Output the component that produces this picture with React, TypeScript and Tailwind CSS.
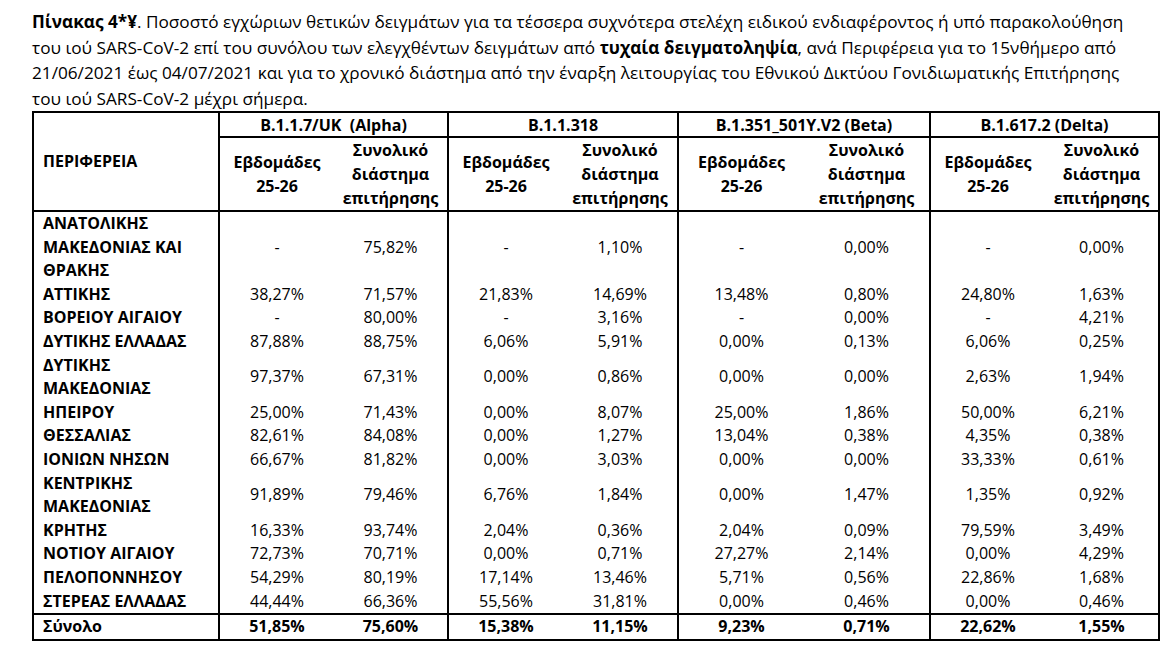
import React from "react"

type Row = { name: string[]; vals: string[] }

const rows: Row[] = [
  { name: ["ΑΝΑΤΟΛΙΚΗΣ", "ΜΑΚΕΔΟΝΙΑΣ ΚΑΙ", "ΘΡΑΚΗΣ"], vals: ["-", "75,82%", "-", "1,10%", "-", "0,00%", "-", "0,00%"] },
  { name: ["ΑΤΤΙΚΗΣ"], vals: ["38,27%", "71,57%", "21,83%", "14,69%", "13,48%", "0,80%", "24,80%", "1,63%"] },
  { name: ["ΒΟΡΕΙΟΥ ΑΙΓΑΙΟΥ"], vals: ["-", "80,00%", "-", "3,16%", "-", "0,00%", "-", "4,21%"] },
  { name: ["ΔΥΤΙΚΗΣ ΕΛΛΑΔΑΣ"], vals: ["87,88%", "88,75%", "6,06%", "5,91%", "0,00%", "0,13%", "6,06%", "0,25%"] },
  { name: ["ΔΥΤΙΚΗΣ", "ΜΑΚΕΔΟΝΙΑΣ"], vals: ["97,37%", "67,31%", "0,00%", "0,86%", "0,00%", "0,00%", "2,63%", "1,94%"] },
  { name: ["ΗΠΕΙΡΟΥ"], vals: ["25,00%", "71,43%", "0,00%", "8,07%", "25,00%", "1,86%", "50,00%", "6,21%"] },
  { name: ["ΘΕΣΣΑΛΙΑΣ"], vals: ["82,61%", "84,08%", "0,00%", "1,27%", "13,04%", "0,38%", "4,35%", "0,38%"] },
  { name: ["ΙΟΝΙΩΝ ΝΗΣΩΝ"], vals: ["66,67%", "81,82%", "0,00%", "3,03%", "0,00%", "0,00%", "33,33%", "0,61%"] },
  { name: ["ΚΕΝΤΡΙΚΗΣ", "ΜΑΚΕΔΟΝΙΑΣ"], vals: ["91,89%", "79,46%", "6,76%", "1,84%", "0,00%", "1,47%", "1,35%", "0,92%"] },
  { name: ["ΚΡΗΤΗΣ"], vals: ["16,33%", "93,74%", "2,04%", "0,36%", "2,04%", "0,09%", "79,59%", "3,49%"] },
  { name: ["ΝΟΤΙΟΥ ΑΙΓΑΙΟΥ"], vals: ["72,73%", "70,71%", "0,00%", "0,71%", "27,27%", "2,14%", "0,00%", "4,29%"] },
  { name: ["ΠΕΛΟΠΟΝΝΗΣΟΥ"], vals: ["54,29%", "80,19%", "17,14%", "13,46%", "5,71%", "0,56%", "22,86%", "1,68%"] },
  { name: ["ΣΤΕΡΕΑΣ ΕΛΛΑΔΑΣ"], vals: ["44,44%", "66,36%", "55,56%", "31,81%", "0,00%", "0,46%", "0,00%", "0,46%"] },
]

const total = ["51,85%", "75,60%", "15,38%", "11,15%", "9,23%", "0,71%", "22,62%", "1,55%"]

const groups = ["B.1.1.7/UK\u00a0\u00a0(Alpha)", "B.1.1.318", "B.1.351_501Y.V2 (Beta)", "B.1.617.2 (Delta)"]

export default function App() {
  return (
    <div className="w-[1171px] h-[652px] bg-white text-black overflow-hidden pl-[32px] pt-[9px] font-['Open_Sans',sans-serif] font-medium">
      {/* caption */}
      <div className="text-[17.2px] leading-[25.5px] whitespace-nowrap">
        <div>
          <b className="font-bold">Πίνακας 4*¥</b>. Ποσοστό εγχώριων θετικών δειγμάτων για τα τέσσερα συχνότερα στελέχη ειδικού ενδιαφέροντος ή υπό παρακολούθηση
        </div>
        <div>
          του ιού SARS-CoV-2 επί του συνόλου των ελεγχθέντων δειγμάτων από <b className="font-bold">τυχαία δειγματοληψία</b>, ανά Περιφέρεια για το 15νθήμερο από
        </div>
        <div>21/06/2021 έως 04/07/2021 και για το χρονικό διάστημα από την έναρξη λειτουργίας του Εθνικού Δικτύου Γονιδιωματικής Επιτήρησης</div>
        <div>του ιού SARS-CoV-2 μέχρι σήμερα.</div>
      </div>

      <table className="border-collapse table-fixed w-[1126px] border-2 border-black text-[16px] leading-[23.6px]">
        <colgroup>
          <col className="w-[186px]" />
          <col className="w-[115px]" />
          <col className="w-[114px]" />
          <col className="w-[115px]" />
          <col className="w-[115px]" />
          <col className="w-[126px]" />
          <col className="w-[126px]" />
          <col className="w-[115px]" />
          <col className="w-[114px]" />
        </colgroup>
        <thead>
          <tr className="h-[25px]">
            <th rowSpan={2} className="border-2 border-black text-left align-middle pl-[9px] font-bold">
              ΠΕΡΙΦΕΡΕΙΑ
            </th>
            {groups.map((g) => (
              <th key={g} colSpan={2} className="border-2 border-black text-center font-bold p-0 leading-[22px]">
                {g}
              </th>
            ))}
          </tr>
          <tr className="h-[74px]">
            {groups.map((g) => (
              <React.Fragment key={g}>
                <th className="border-b-2 border-l-2 border-black text-center align-middle font-bold leading-[24px] p-0">
                  Εβδομάδες
                  <br />
                  25-26
                </th>
                <th className="border-b-2 border-black text-center align-middle font-bold leading-[24px] p-0">
                  Συνολικό
                  <br />
                  διάστημα
                  <br />
                  επιτήρησης
                </th>
              </React.Fragment>
            ))}
          </tr>
        </thead>
        <tbody>
          {rows.map((r) => (
            <tr key={r.name.join(" ")}>
              <td className="border-r-2 border-black pl-[9px] py-0 font-bold whitespace-nowrap align-middle">
                {r.name.map((n, i) => (
                  <div key={i}>{n}</div>
                ))}
              </td>
              {r.vals.map((v, i) => (
                <td
                  key={i}
                  className={`text-center align-middle p-0 ${i % 2 === 0 ? "border-l-2 border-black" : ""}`}
                >
                  {v}
                </td>
              ))}
            </tr>
          ))}
          <tr className="h-[24px]">
            <td className="border-2 border-black pl-[9px] py-0 font-bold">Σύνολο</td>
            {total.map((v, i) => (
              <td
                key={i}
                className={`border-t-2 border-b-2 border-black text-center font-bold p-0 ${i % 2 === 0 ? "border-l-2" : ""}`}
              >
                {v}
              </td>
            ))}
          </tr>
        </tbody>
      </table>
    </div>
  )
}
